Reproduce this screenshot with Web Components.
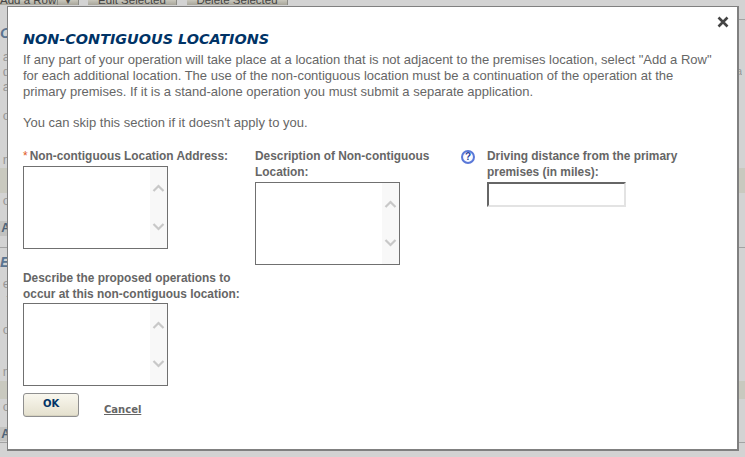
<!DOCTYPE html>
<html>
<head>
<meta charset="utf-8">
<title>Non-contiguous locations</title>
<style>
  html, body { margin: 0; height: 100%; overflow: hidden; background: #d3d3d3; }
  body { font-family: "Liberation Sans", Arial, sans-serif; }
</style>
</head>
<body>
<page-backdrop></page-backdrop>
<modal-dialog heading="NON-CONTIGUOUS LOCATIONS">
  <p>If any part of your operation will take place at a location that is not adjacent to the premises location, select "Add a Row" for each additional location. The use of the non-contiguous location must be a continuation of the operation at the primary premises. If it is a stand-alone operation you must submit a separate application.</p>
  <p>You can skip this section if it doesn't apply to you.</p>
  <form-grid>
    <form-field required>
      <span slot="label">Non-contiguous Location Address:</span>
      <scroll-box></scroll-box>
    </form-field>
    <form-field>
      <span slot="label">Description of Non-contiguous Location:</span>
      <scroll-box></scroll-box>
    </form-field>
    <form-field help>
      <span slot="label">Driving distance from the primary premises (in miles):</span>
      <text-box></text-box>
    </form-field>
    <form-field style="--label-gap:1px">
      <span slot="label">Describe the proposed operations to occur at this non-contiguous location:</span>
      <scroll-box></scroll-box>
    </form-field>
  </form-grid>
  <dialog-actions></dialog-actions>
</modal-dialog>

<script>
class PageBackdrop extends HTMLElement {
  constructor () {
    super()
    this.shadow = this.attachShadow({ mode: 'open' })
  }

  connectedCallback () {
    // strips of the page that stay visible round the dialog
    const rows = [
      ['gap', 14, ''],
      ['rule right', 1, ''],
      ['gap', 7, ''],
      ['head', 12, 'C'],
      ['gap', 10, ''],
      ['text', 15, 'a'],
      ['text', 15, 'd', 'a'],
      ['text', 15, 'a'],
      ['gap', 14, ''],
      ['text', 15, 'o'],
      ['gap', 29, ''],
      ['text', 16, 'n'],
      ['band', 25, ''],
      ['text', 15, 'o'],
      ['gap', 13, ''],
      ['add', 15, 'A'],
      ['gap', 11, ''],
      ['rule', 1, ''],
      ['gap', 8, ''],
      ['head', 12, 'E'],
      ['gap', 8, ''],
      ['text', 15, 'e'],
      ['text', 15, 'f'],
      ['gap', 16, ''],
      ['text', 15, 'o'],
      ['gap', 27, ''],
      ['text', 17, 'n'],
      ['band', 18, ''],
      ['text', 15, 'o'],
      ['gap', 13, ''],
      ['add', 14, 'A'],
      ['gap', 1, ''],
      ['rule', 1, '']
    ]
    this.shadow.innerHTML =
      /* html */`
      <style>
      :host { display: block; height: 457px; overflow: hidden; font-size: 13px; color: #979797; }
      .row { display: flex; line-height: 15px; white-space: nowrap; }
      .row span { display: block; width: 10px; text-align: right; }
      .row span.far { width: 3px; margin-left: 729px; overflow: hidden; direction: rtl; font-size: 11px; }
      .rule { background: #a3a3a3; }
      .rule.right { background: linear-gradient(to right, transparent 739px, #a3a3a3 739px); }
      .band { background: #c9c9bf; }
      .head { color: #5b7591; font-weight: bold; font-style: italic; font-size: 15px; line-height: 12px; }
      .add { background: linear-gradient(to right, #c2c2c0 7px, transparent 7px); color: #4f6478; font-weight: bold; font-size: 12px; }
      .buttons { display: flex; height: 5px; overflow: hidden; font-size: 11.5px; color: #444; white-space: nowrap; }
      .btn { background: linear-gradient(#c9c7bc, #a8a69b); border-right: 1px solid #8b8b85; height: 5px; text-align: center; line-height: 1px; }
      .btn.add-row { width: 57px; text-align: left; }
      .btn.menu { width: 20px; margin-right: 9px; }
      .btn.edit { width: 88px; margin-right: 10px; }
      .btn.del { width: 100px; }
      </style>
      <div class="buttons">
        <div class="btn add-row">Add a Row</div>
        <div class="btn menu">▾</div>
        <div class="btn edit">Edit Selected</div>
        <div class="btn del">Delete Selected</div>
      </div>
      ${rows.map(([kind, height, letter, far]) => `
        <div class="row ${kind}" style="height:${height}px"><span>${letter}</span>${far ? `<span class="far">${far}</span>` : ''}</div>`).join('')}
      `
  }
}

class ModalDialog extends HTMLElement {
  constructor () {
    super()
    this.shadow = this.attachShadow({ mode: 'open' })
  }

  connectedCallback () {
    this.shadow.innerHTML =
      /* html */`
      <style>
      :host {
        position: absolute;
        left: 7px;
        top: 6px;
        width: 732px;
        height: 445px;
        box-sizing: border-box;
        display: block;
        background: #fff;
        border: 1px solid #808080;
        border-right-width: 2px;
        border-bottom-width: 2px;
        padding: 0 15px;
        font-size: 13px;
        line-height: 16px;
        color: #666;
      }
      .close { display: flex; justify-content: flex-end; padding: 9px 0 0; height: 14px; margin-right: -7px; }
      h2 {
        margin: -1px 0 3px;
        font: italic bold 14.4px/20px "DejaVu Sans", Verdana, sans-serif;
        color: #003366;
      }
      ::slotted(p) { margin: 0 0 15px; max-width: 695px; }
      </style>
      <div class="close">
        <svg width="12" height="12" viewBox="0 0 12 12"><path d="M1.5 1.5L10.5 10.5M10.5 1.5L1.5 10.5" stroke="#444" stroke-width="2.6" fill="none"/></svg>
      </div>
      <h2>${this.getAttribute('heading')}</h2>
      <slot></slot>
      `
  }
}

class FormGrid extends HTMLElement {
  constructor () {
    super()
    this.shadow = this.attachShadow({ mode: 'open' })
    this.shadow.innerHTML =
      /* html */`
      <style>
      :host { display: grid; grid-template-columns: 232px 232px 232px; align-items: start; row-gap: 5px; margin-top: 17px; }
      </style>
      <slot></slot>
      `
  }
}

class FormField extends HTMLElement {
  constructor () {
    super()
    this.shadow = this.attachShadow({ mode: 'open' })
    this.shadow.innerHTML =
      /* html */`
      <style>
      :host { display: block; position: relative; width: 225px; font-weight: bold; font-size: 11.9px; line-height: 16px; }
      .label { display: block; margin-bottom: var(--label-gap, 2px); }
      .star { color: #e05a1c; font-weight: normal; margin-right: 2px; }
      .help {
        position: absolute;
        left: -26px;
        top: 2px;
        width: 14px;
        height: 14px;
        box-sizing: border-box;
        border: 2px solid #5a78d8;
        border-radius: 50%;
        background: radial-gradient(circle, #fff 40%, #dfe6fb);
        color: #27409b;
        font: bold 10px/10px "Liberation Sans", sans-serif;
        text-align: center;
      }
      </style>
      ${this.hasAttribute('help') ? '<span class="help">?</span>' : ''}
      <span class="label">${this.hasAttribute('required') ? '<span class="star">*</span>' : ''}<slot name="label"></slot></span>
      <slot></slot>
      `
  }
}

class ScrollBox extends HTMLElement {
  constructor () {
    super()
    this.shadow = this.attachShadow({ mode: 'open' })
    this.shadow.innerHTML =
      /* html */`
      <style>
      :host {
        display: flex;
        justify-content: flex-end;
        width: 145px;
        height: 83px;
        box-sizing: border-box;
        border: 1px solid #707070;
        background: #fff;
      }
      .track {
        width: 17px;
        background: #f8f8f8;
        display: flex;
        flex-direction: column;
        justify-content: space-between;
        align-items: center;
        padding: 17px 0 17px;
        box-sizing: border-box;
      }
      svg { display: block; }
      </style>
      <div class="track">
        <svg width="13" height="9" viewBox="0 0 13 9"><path d="M1.5 7L6.5 2L11.5 7" stroke="#c8c8c8" stroke-width="2.2" fill="none"/></svg>
        <svg width="13" height="9" viewBox="0 0 13 9"><path d="M1.5 2L6.5 7L11.5 2" stroke="#c8c8c8" stroke-width="2.2" fill="none"/></svg>
      </div>
      `
  }
}

class TextBox extends HTMLElement {
  constructor () {
    super()
    this.shadow = this.attachShadow({ mode: 'open' })
    this.shadow.innerHTML =
      /* html */`
      <style>
      :host {
        display: block;
        width: 139px;
        height: 25px;
        box-sizing: border-box;
        border: 2px solid;
        border-color: #666 #e3e3e3 #e3e3e3 #666;
        background: #fff;
      }
      </style>
      `
  }
}

class DialogActions extends HTMLElement {
  constructor () {
    super()
    this.shadow = this.attachShadow({ mode: 'open' })
    this.shadow.innerHTML =
      /* html */`
      <style>
      :host { display: flex; align-items: flex-end; gap: 25px; margin-top: 7px; font-family: "DejaVu Sans", Verdana, sans-serif; font-weight: bold; }
      .ok {
        width: 56px;
        height: 24px;
        box-sizing: border-box;
        border: 1px solid #8f8f8f;
        border-radius: 3px;
        background: linear-gradient(#f9f7ee, #e4e0cd);
        box-shadow: inset 0 -1px 0 #d6d2bf;
        color: #003366;
        font-size: 10px;
        line-height: 20px;
        text-align: center;
      }
      .cancel { color: #666; font-size: 10px; line-height: 12px; text-decoration: underline; margin-bottom: 1px; }
      </style>
      <div class="ok">OK</div>
      <span class="cancel">Cancel</span>
      `
  }
}

customElements.define('page-backdrop', PageBackdrop)
customElements.define('modal-dialog', ModalDialog)
customElements.define('form-grid', FormGrid)
customElements.define('form-field', FormField)
customElements.define('scroll-box', ScrollBox)
customElements.define('text-box', TextBox)
customElements.define('dialog-actions', DialogActions)
</script>
</body>
</html>
